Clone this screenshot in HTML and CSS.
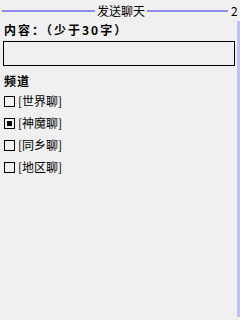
FILE: index.html
```html
<!DOCTYPE html>
<html>
<head>
<meta charset="utf-8">
<link rel="stylesheet" href="styles.css">
</head>
<body>
<div class="header">
  <div class="line line-left"></div>
  <div class="title">发送聊天</div>
  <div class="line line-right"></div>
  <div class="page">2</div>
</div>
<div class="main">
  <div class="content">
    <div class="label">内容：（少于30字）</div>
    <div class="input"></div>
    <div class="label section">频道</div>
    <div class="option"><span class="box"></span><span class="opt-text">[世界聊]</span></div>
    <div class="option"><span class="box checked"></span><span class="opt-text">[神魔聊]</span></div>
    <div class="option"><span class="box"></span><span class="opt-text">[同乡聊]</span></div>
    <div class="option"><span class="box"></span><span class="opt-text">[地区聊]</span></div>
  </div>
  <div class="scrollbar"></div>
</div>
</body>
</html>
```
FILE: styles.css
```css
html, body {
  margin: 0;
  padding: 0;
  width: 240px;
  height: 320px;
  background: #eff0ef;
  overflow: hidden;
}
body {
  font-family: "Noto Sans CJK SC", "DejaVu Sans", sans-serif;
  font-size: 12px;
  color: #000;
}
.header {
  display: flex;
  align-items: center;
  height: 21px;
  padding-left: 2px;
}
.line {
  height: 2px;
  background: #8c8cf0;
  margin-top: 1px;
}
.line-left {
  width: 93px;
}
.title {
  margin: 0 2px;
  font-size: 12px;
  line-height: 21px;
}
.line-right {
  width: 81px;
}
.page {
  margin-left: 3px;
  line-height: 21px;
}
.main {
  display: flex;
  height: 299px;
}
.content {
  flex: 1;
  padding-left: 3px;
}
.label {
  font-weight: bold;
  letter-spacing: 2px;
  height: 20px;
  line-height: 18px;
  margin-left: 1px;
}
.input {
  width: 230px;
  height: 23px;
  border: 1px solid #000;
  margin-bottom: 6px;
}
.section {
  height: 18px;
  letter-spacing: 1px;
}
.option {
  display: flex;
  align-items: center;
  height: 22px;
  padding-left: 1px;
}
.box {
  border: 1px solid #000;
  margin-right: 3px;
  position: relative;
  box-sizing: border-box;
  width: 11px;
  height: 11px;
}
.box.checked::after {
  content: "";
  position: absolute;
  left: 2px;
  top: 2px;
  width: 5px;
  height: 5px;
  background: #000;
}
.opt-text {
  line-height: 22px;
}
.scrollbar {
  width: 3px;
  height: 296px;
  background: #c0c0f8;
}
```
